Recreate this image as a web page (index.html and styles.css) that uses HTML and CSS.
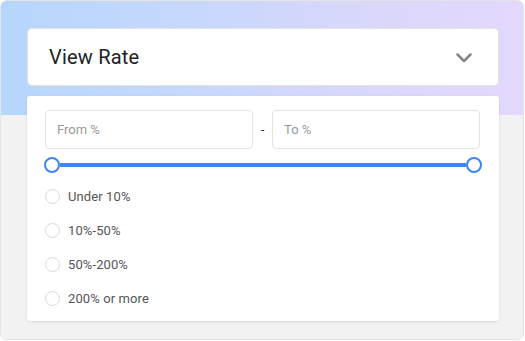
FILE: index.html
```html
<!DOCTYPE html>
<html>
<head>
<meta charset="utf-8">
<link rel="stylesheet" href="styles.css">
</head>
<body>
<div class="frame">
  <div class="header">
    <span class="title">View Rate</span>
    <svg class="chev" width="16" height="10" viewBox="0 0 16 10"><path d="M1.5 1.5 L8 8 L14.5 1.5" fill="none" stroke="#85858c" stroke-width="2.5" stroke-linecap="round" stroke-linejoin="round"/></svg>
  </div>
  <div class="panel">
    <div class="range">
      <div class="input">From %</div>
      <span class="dash">-</span>
      <div class="input">To %</div>
    </div>
    <div class="slider">
      <span class="thumb"></span>
      <span class="track"></span>
      <span class="thumb"></span>
    </div>
    <ul class="options">
      <li><span class="radio"></span>Under 10%</li>
      <li><span class="radio"></span>10%-50%</li>
      <li><span class="radio"></span>50%-200%</li>
      <li><span class="radio"></span>200% or more</li>
    </ul>
  </div>
</div>
</body>
</html>
```

FILE: styles.css
```css
* { box-sizing: border-box; }
body {
  margin: 0;
  background: #ffffff;
  font-family: Roboto, "Liberation Sans", sans-serif;
}
.frame {
  width: 524px;
  height: 340px;
  border: 1px solid #e4e4e4;
  border-radius: 7px;
  overflow: hidden;
  background:
    linear-gradient(90deg, #b6d6fd 0%, #c6d8fc 35%, #d9d7fb 70%, #e4d8fd 100%) top / 100% 114px no-repeat,
    #f2f2f2;
  padding: 27px 0 0 26px;
}
.header {
  width: 472px;
  height: 58px;
  background: #fff;
  border: 1px solid #e2e2e4;
  border-radius: 5px;
  display: flex;
  align-items: center;
  justify-content: space-between;
  padding: 0 26px 0 21px;
}
.title {
  font-size: 20px;
  color: #222;
  letter-spacing: 0.2px;
}
.chev { display: block; margin-top: 1px; }
.panel {
  margin-top: 10px;
  width: 472px;
  height: 225px;
  background: #fff;
  border-radius: 3px;
  box-shadow: 0 1px 3px rgba(0,0,0,0.10);
  padding: 14px 19px 0 18px;
}
.range {
  display: flex;
  align-items: center;
}
.input {
  width: 208px;
  height: 39px;
  border: 1px solid #e3e3e3;
  border-radius: 4px;
  font-size: 13px;
  color: #9a9a9a;
  display: flex;
  align-items: center;
  padding-left: 11px;
}
.dash {
  width: 19px;
  text-align: center;
  font-size: 13px;
  color: #333;
}
.slider {
  display: flex;
  align-items: center;
  margin: 8px 0 0 -1px;
  width: 438px;
  height: 16px;
}
.thumb {
  width: 16px;
  height: 16px;
  border-radius: 50%;
  border: 2.5px solid #3d86f2;
  background: #fff;
  flex: none;
}
.track {
  flex: 1;
  height: 4px;
  background: #3d86f2;
}
.options {
  list-style: none;
  margin: 6px 0 0 0;
  padding: 0;
}
.options li {
  display: flex;
  align-items: center;
  height: 34px;
  font-size: 13px;
  color: #555;
  letter-spacing: 0.1px;
}
.radio {
  width: 15px;
  height: 15px;
  border: 1px solid #d9d9d9;
  border-radius: 50%;
  margin-right: 8px;
  flex: none;
}
```
